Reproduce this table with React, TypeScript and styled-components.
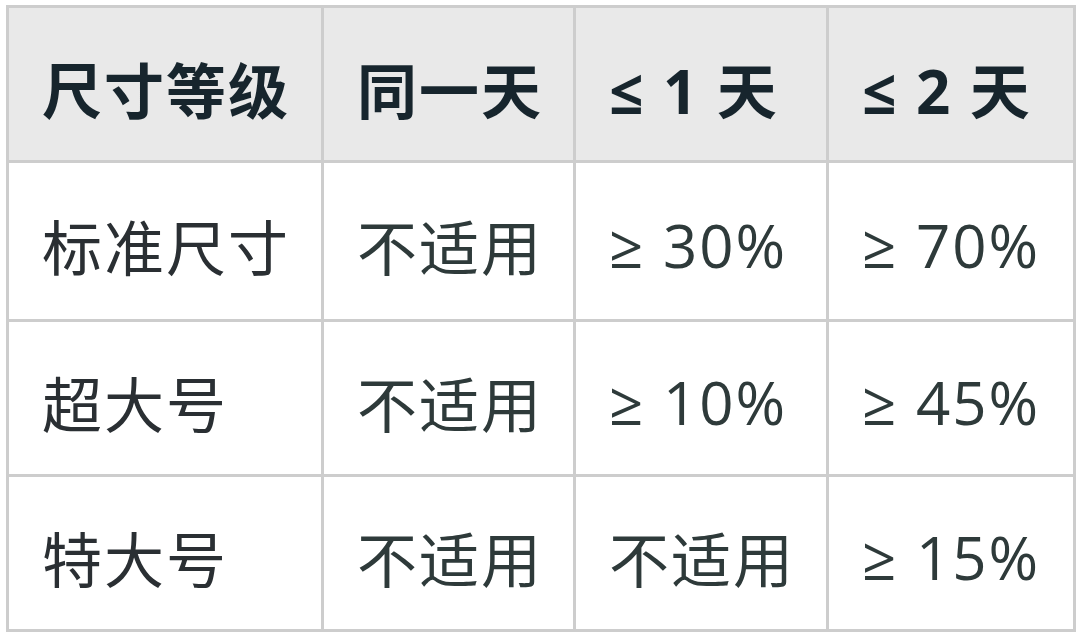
import React from "react";
import styled, { createGlobalStyle } from "styled-components";

const Global = createGlobalStyle`
  html, body { margin: 0; padding: 0; background: #ffffff; }
  body { font-family: "Open Sans", "Noto Sans CJK SC", sans-serif; }
  *, *::before, *::after { box-sizing: border-box; }
`;

const Wrap = styled.div`
  padding: 5px 0 0 6px;
`;

const Table = styled.table`
  border-collapse: collapse;
  table-layout: fixed;
  width: 1067px;
  border: 3px solid #d0d0d0;
`;

const Col = styled.col<{ $w: number }>`
  width: ${(p) => p.$w}px;
`;

const Row = styled.tr<{ $h: number }>`
  height: ${(p) => p.$h}px;
`;

const Th = styled.th`
  background: #e9e9e9;
  border: 3px solid #cdcdcd;
  text-align: left;
  padding: 8px 0 0 33px;
  font-size: 60px;
  font-weight: 700;
  color: #17252d;
  white-space: nowrap;
  letter-spacing: 2px;
  overflow: hidden;
`;

const Td = styled.td<{ $first?: boolean }>`
  border: 3px solid #cdcdcd;
  text-align: left;
  padding: 8px 0 0 33px;
  font-size: 60px;
  font-weight: 400;
  color: ${(p) => (p.$first ? "#2a2f33" : "#2e3a3a")};
  white-space: nowrap;
  letter-spacing: 2px;
  overflow: hidden;
`;

const widths = [315, 252, 253, 247];
const headers = ["尺寸等级", "同一天", "≤ 1 天", "≤ 2 天"];

const rows = [
  ["标准尺寸", "不适用", "≥ 30%", "≥ 70%"],
  ["超大号", "不适用", "≥ 10%", "≥ 45%"],
  ["特大号", "不适用", "不适用", "≥ 15%"],
];

export default function App() {
  return (
    <>
      <Global />
      <Wrap>
        <Table>
          <colgroup>
            {widths.map((w, i) => (
              <Col key={i} $w={w} />
            ))}
          </colgroup>
          <thead>
            <Row $h={155}>
              {headers.map((h) => (
                <Th key={h}>{h}</Th>
              ))}
            </Row>
          </thead>
          <tbody>
            {rows.map((r, i) => (
              <Row key={i} $h={i === 0 ? 159 : 155}>
                {r.map((c, j) => (
                  <Td key={j} $first={j === 0}>
                    {c}
                  </Td>
                ))}
              </Row>
            ))}
          </tbody>
        </Table>
      </Wrap>
    </>
  );
}
